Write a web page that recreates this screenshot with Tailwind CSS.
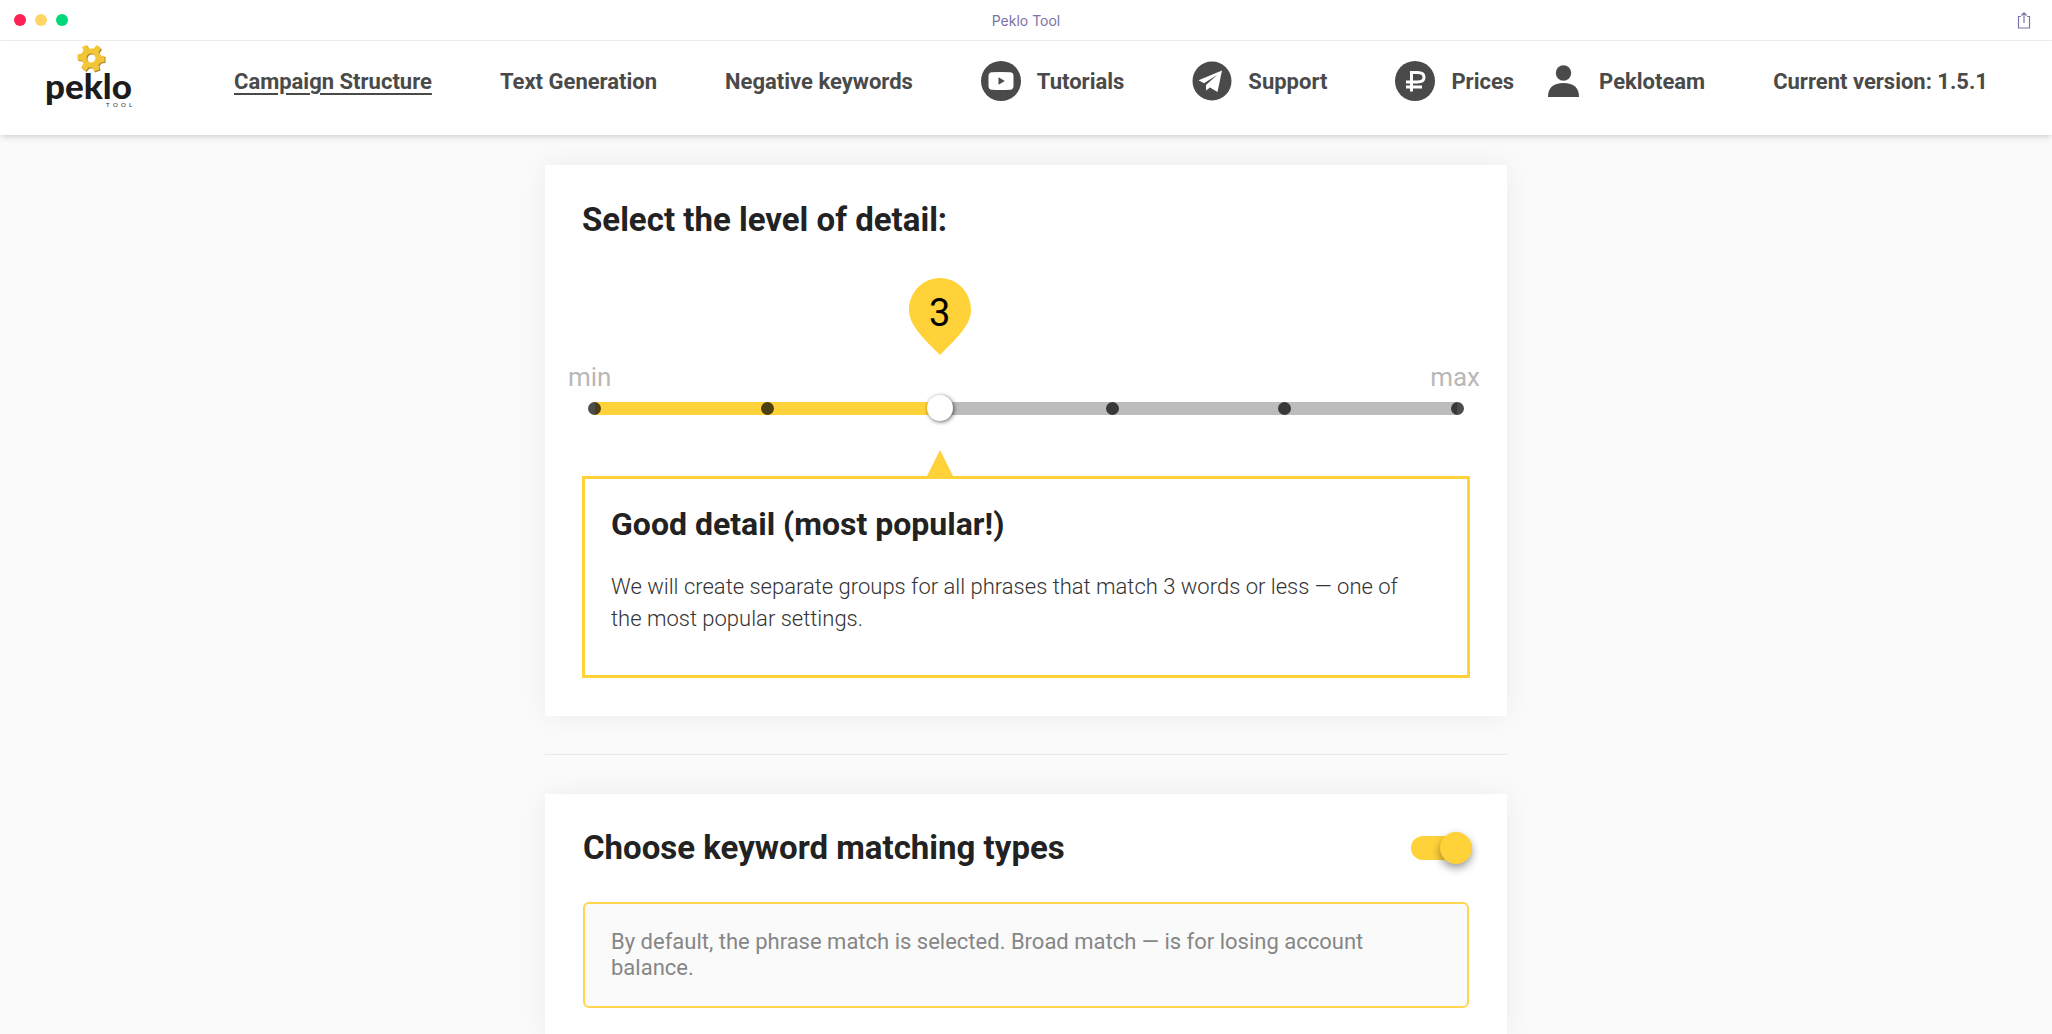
<!DOCTYPE html>
<html lang="en">
<head>
  <meta charset="UTF-8">
  <meta name="viewport" content="width=device-width, initial-scale=1.0">
  <title>Peklo Tool</title>
  <script src="https://cdn.jsdelivr.net/npm/@tailwindcss/browser@4"></script>
</head>
<body class="bg-[#fafafa] min-h-screen flex flex-col font-['Roboto',sans-serif] text-[#222222]">

  <!-- Window bar -->
  <div class="h-[41px] bg-white border-b border-[#ececec] grid grid-cols-3 items-center px-[14px]">
    <div class="flex gap-[9px]">
      <span class="w-3 h-3 rounded-full bg-[#ff1f52]"></span>
      <span class="w-3 h-3 rounded-full bg-[#ffd666]"></span>
      <span class="w-3 h-3 rounded-full bg-[#00d977]"></span>
    </div>
    <p class="pt-0.5 text-center text-sm text-[#7c72a5] font-['Inter',sans-serif]">Peklo Tool</p>
    <button type="button" aria-label="Share" class="justify-self-end mr-1">
      <svg class="w-[20px] h-[20px]" viewBox="0 0 20 20" fill="none" stroke="#7c72a5" stroke-width="1.2">
        <path d="M7 6.500H4.500V18H15.500V6.500H13M10 13V3M7.300 5.500L10 2.800L12.700 5.500"/>
      </svg>
    </button>
  </div>

  <!-- Header -->
  <header class="bg-white shadow-md shadow-black/10 pl-[45px] pr-16 pb-[14px]">
    <nav class="flex items-center h-20 text-[22px] font-bold text-[#4a4a4a] whitespace-nowrap">
      <a href="#" aria-label="Peklo Tool" class="mr-[99px] shrink-0">
        <svg class="w-[90px] h-[72px]" viewBox="0 0 90 72">
          <g transform="translate(46 13)" fill-rule="evenodd">
            <path fill="#a8852a" transform="translate(1 1)" d="M-3-9.500L-4-13L-9-11L-7.500-7.500L-9.500-4.500L-13.500-3.500L-13.500 2L-9 2.500L-7.500 5.500L-10 9.500L-5.500 13L-2.500 9.500L1.500 9.500L3 13.500L8.500 11.500L7.500 7L9.500 4.500L13.500 4L13.500-2L9.500-2.500L7.500-5.500L10-9.500L6-13L2.500-9.500ZM0-4.500A4.500 4.500 0 1 1 0 4.500A4.500 4.500 0 1 1 0-4.500Z"/>
            <path fill="#f2c637" d="M-3-9.500L-4-13L-9-11L-7.500-7.500L-9.500-4.500L-13.500-3.500L-13.500 2L-9 2.500L-7.500 5.500L-10 9.500L-5.500 13L-2.500 9.500L1.500 9.500L3 13.500L8.500 11.500L7.500 7L9.500 4.500L13.500 4L13.500-2L9.500-2.500L7.500-5.500L10-9.500L6-13L2.500-9.500ZM0-4.500A4.500 4.500 0 1 1 0 4.500A4.500 4.500 0 1 1 0-4.500Z"/>
          </g>
          <text x="0" y="54" font-family="Lato, sans-serif" font-size="35" font-weight="900" fill="#1c1c1c">peklo</text>
          <text x="61 68 76 84" y="62" font-family="Lato, sans-serif" font-size="6" font-weight="400" fill="#1c1c1c">TOOL</text>
        </svg>
      </a>
      <div class="flex items-center justify-between grow gap-4">
        <a href="#" class="underline decoration-2 underline-offset-4">Campaign Structure</a>
        <a href="#">Text Generation</a>
        <a href="#">Negative keywords</a>
        <a href="#" class="flex items-center gap-4">
          <svg class="w-10 h-10" viewBox="0 0 40 40">
            <circle cx="20" cy="20" r="20" fill="#4a4a4a"/>
            <path fill="#fff" d="M11 11.300Q20 10.700 29 11.300Q32.500 11.500 32.500 15V25Q32.500 28.500 29 28.700Q20 29.300 11 28.700Q7.500 28.500 7.500 25V15Q7.500 11.500 11 11.300Z"/>
            <path fill="#4a4a4a" d="M17.500 16.200V23.800L23.800 20Z"/>
          </svg>
          Tutorials
        </a>
        <a href="#" class="flex items-center gap-4">
          <svg class="w-10 h-10" viewBox="0 0 40 40">
            <circle cx="20" cy="20" r="19.500" fill="#4a4a4a"/>
            <path fill="#fff" d="M30 9.500L6.500 19.300L12 22.300L25 14L14 24V29.500L18 26.500L25.500 31Z"/>
          </svg>
          Support
        </a>
        <div class="flex items-center gap-[34px]">
          <a href="#" class="flex items-center gap-4">
            <svg class="w-10 h-10" viewBox="0 0 40 40">
              <circle cx="20" cy="20" r="20" fill="#4a4a4a"/>
              <path fill="none" stroke="#fff" stroke-width="3" d="M16.500 30.500V11.500H22.500Q29 11.500 29 16.300Q29 21 22.500 21H11M11 26H27"/>
            </svg>
            Prices
          </a>
          <a href="#" class="flex items-center gap-5">
            <svg class="w-[31px] h-8" viewBox="0 0 31 32" fill="#4a4a4a">
              <circle cx="15.500" cy="8" r="7.700"/>
              <path d="M0 32Q0 18 15.500 18Q31 18 31 32Z"/>
            </svg>
            Pekloteam
          </a>
        </div>
        <span>Current version: 1.5.1</span>
      </div>
    </nav>
  </header>

  <main class="w-full max-w-[962px] mx-auto pt-[30px] grow flex flex-col">

    <!-- Level of detail -->
    <section class="bg-white shadow-[0_0_24px_rgba(0,0,0,0.06)] px-[37px] pt-[35px] pb-[38px]">
      <h2 class="text-[33px] leading-10 font-bold"><label for="level">Select the level of detail:</label></h2>

      <div class="mx-[13px] pt-[38px]">
        <div id="pin" class="w-[62px] -translate-x-1/2 grid" style="margin-left: 40%">
          <svg class="col-start-1 row-start-1 w-[62px] h-[77px]" viewBox="0 0 62 77" fill="#ffd239">
            <path d="M31 0C48 0 62 14 62 32C62 47 48 60 31 77C14 60 0 47 0 32C0 14 14 0 31 0Z"/>
          </svg>
          <output id="levelNumber" for="level" class="col-start-1 row-start-1 pt-[10px] text-center text-[38px] leading-[50px] text-black">3</output>
        </div>
      </div>

      <div class="-mx-[14px] pt-1 flex justify-between text-[26px] leading-9 text-[#b8b8b8]">
        <span>min</span>
        <span class="mr-[4px]">max</span>
      </div>

      <div class="grid items-center">
        <div class="col-start-1 row-start-1 mx-[13px] h-[13px] bg-[#bcbcbc]">
          <div id="fill" class="h-full bg-[#ffd239]" style="width: 40%"></div>
        </div>
        <div class="col-start-1 row-start-1 mx-[6px] flex justify-between">
          <span class="w-[13px] h-[13px] rounded-full bg-black/70"></span>
          <span class="w-[13px] h-[13px] rounded-full bg-black/70"></span>
          <span class="w-[13px] h-[13px] rounded-full bg-black/70"></span>
          <span class="w-[13px] h-[13px] rounded-full bg-black/70"></span>
          <span class="w-[13px] h-[13px] rounded-full bg-black/70"></span>
          <span class="w-[13px] h-[13px] rounded-full bg-black/70"></span>
        </div>
        <input type="range" id="level" min="1" max="6" value="3"
          class="col-start-1 row-start-1 z-10 w-full h-[26px] appearance-none bg-transparent cursor-pointer [&::-webkit-slider-thumb]:appearance-none [&::-webkit-slider-thumb]:w-[26px] [&::-webkit-slider-thumb]:h-[26px] [&::-webkit-slider-thumb]:rounded-full [&::-webkit-slider-thumb]:bg-white [&::-webkit-slider-thumb]:shadow-[1px_1px_4px_rgba(0,0,0,0.6)]">
      </div>

      <div class="mx-[13px] pt-[29px]">
        <svg id="arrow" class="block w-[26px] h-[26px] -translate-x-1/2" style="margin-left: 40%" viewBox="0 0 26 26" fill="#ffd239">
          <path d="M13 0L26 26H0Z"/>
        </svg>
      </div>
      <div class="border-3 border-[#ffd239] pl-[26px] pr-[50px] pt-[25px] pb-[34px]">
        <h3 class="text-[32px] leading-10 font-bold">Good detail (most popular!)</h3>
        <p class="mt-[27px] mb-[6px] text-[22px] leading-8 font-light text-[#333333]">We will create separate groups for all phrases that match 3 words or less — one of the most popular settings.</p>
      </div>
    </section>

    <hr class="mt-[38px] mb-[39px] border-[#e8e8e8]">

    <!-- Matching types -->
    <section class="bg-white shadow-[0_0_24px_rgba(0,0,0,0.06)] px-[38px] pt-[34px] pb-7 grow">
      <div class="flex items-center justify-between">
        <h2 class="text-[33px] leading-10 font-bold"><label for="matching">Choose keyword matching types</label></h2>
        <input type="checkbox" id="matching" checked
          class="appearance-none w-[61px] h-6 -mr-[3px] flex items-center rounded-full bg-linear-to-r from-[#bcbcbc] to-[#bcbcbc] checked:from-[#ffd239] checked:to-[#ffd239] checked:justify-end cursor-pointer before:w-8 before:h-8 before:rounded-full before:bg-[#ffd239] before:shadow-[0_4px_8px_rgba(0,0,0,0.4)]">
      </div>
      <p class="mt-[34px] border-2 border-[#ffd64f] rounded-md bg-[#fafafa] px-[26px] py-[25px] text-[22px] leading-[26px] text-[#868686]">By default, the phrase match is selected. Broad match — is for losing account balance.</p>
    </section>

  </main>

  <script>
    const level = document.getElementById("level");

    // Keep pin, arrow and filled track under the thumb
    level.addEventListener("input", () => {
      const percent = (level.value - 1) * 20 + "%";
      document.getElementById("levelNumber").textContent = level.value;
      document.getElementById("pin").style.marginLeft = percent;
      document.getElementById("arrow").style.marginLeft = percent;
      document.getElementById("fill").style.width = percent;
    });
  </script>
</body>
</html>
